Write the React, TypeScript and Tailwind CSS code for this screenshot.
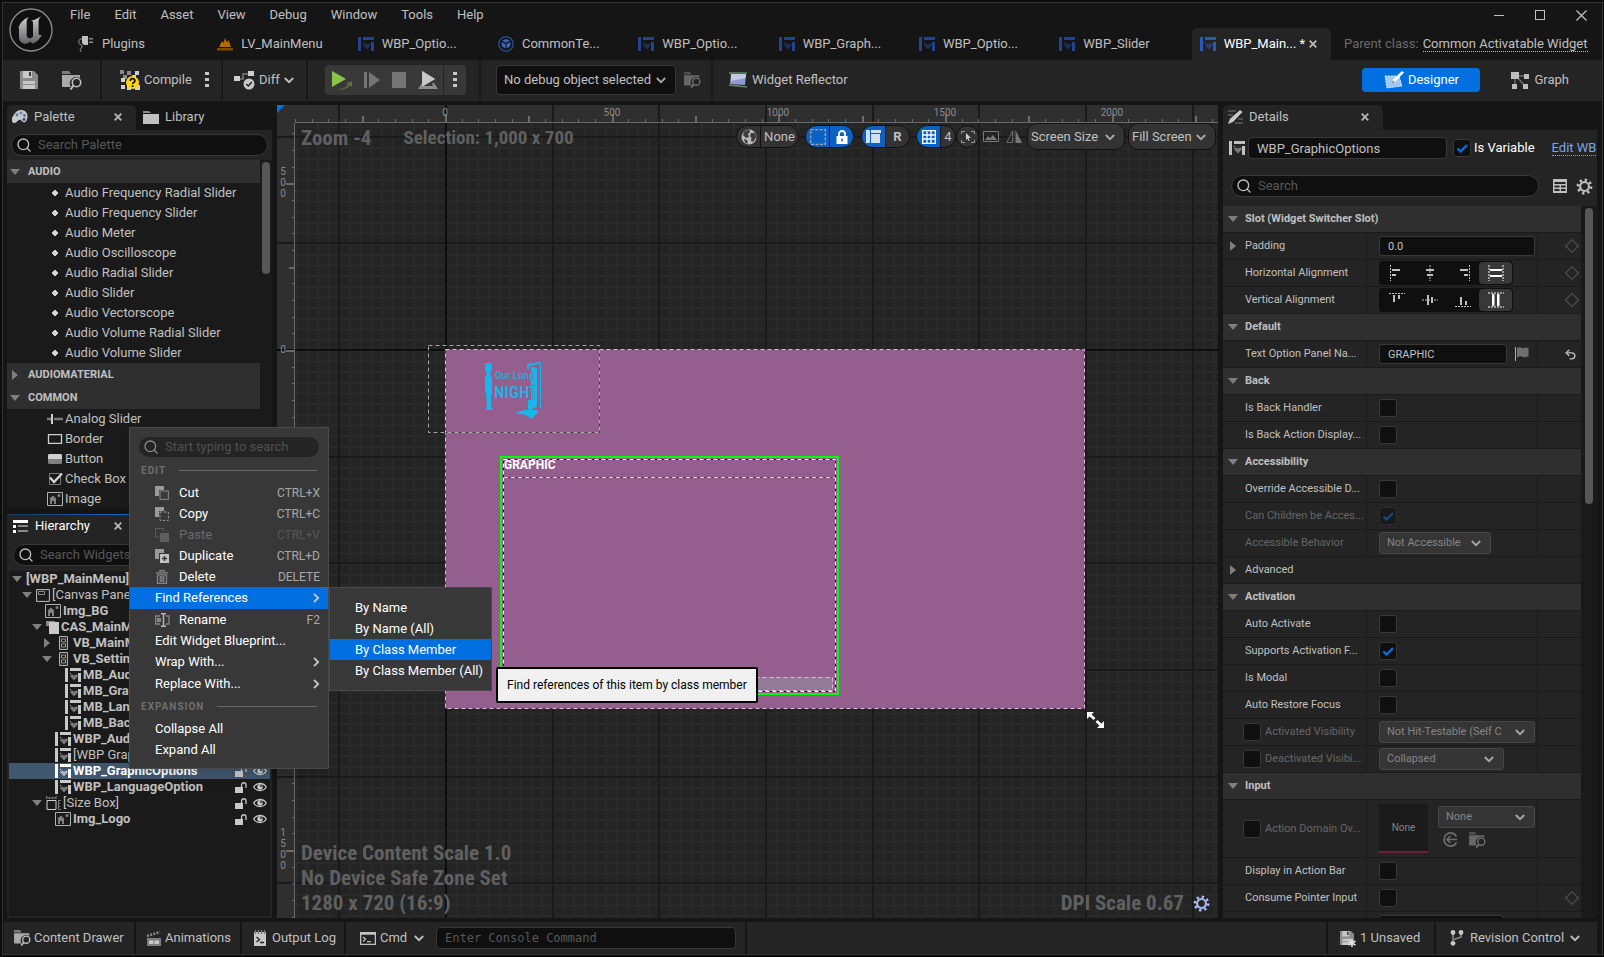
import type { ReactNode } from "react";
import { Search, Undo2 } from "lucide-react";
import { clsx } from "clsx";

type IconProps = { className?: string };

/* ---------- icons ---------- */

const UnrealLogo = () => (
  <svg viewBox="0 0 44 46" className="h-[46px] w-11">
    <defs>
      <linearGradient id="steel" x1="0" y1="0" x2="0" y2="1">
        <stop offset="0" stopColor="#d0d0d0" />
        <stop offset="1" stopColor="#5f6468" />
      </linearGradient>
    </defs>
    <circle cx="22" cy="22" r="21" fill="#101010" stroke="#8a8a8a" strokeWidth="1.4" />
    <path
      d="M9 22c1-6 5-11 11-13-1.800 1.600-2.300 3-2.300 5v13c0 2 1.300 3.300 2.800 3.300s2.700-.8 3.500-1.800V15c0-1.700-.6-2.200-2-2.300 3.600-.5 7-2.200 10-4.700-2 2.500-2.400 4-2.400 6v11c0 2 1 2.600 3.400 1.500-2 4.500-5 7.500-9.500 9.300l-2.300-2.300c-1.500 1.500-3.500 2.300-6 2.300-3.500-1-5.200-3-5.200-6.500V19c0-1.500-.4-1.700-1 3z"
      fill="url(#steel)"
    />
  </svg>
);

const Chevron = ({ right, className }: { right?: boolean; className?: string }) => (
  <svg viewBox="0 0 10 10" className={clsx("h-[10px] w-[10px] shrink-0", className)} fill="none" stroke="currentColor" strokeWidth="1.800">
    {right ? <path d="M3 .800L7.200 5 3 9.200" /> : <path d="M.8 3L5 7.200 9.200 3" />}
  </svg>
);

const GearIcon = ({ className }: IconProps) => (
  <svg viewBox="0 0 18 18" className={clsx("h-[17px] w-[17px]", className)} fill="none" stroke="currentColor">
    <circle cx="9" cy="9" r="4.700" strokeWidth="2.200" />
    <circle cx="9" cy="9" r="7" strokeWidth="2.800" strokeDasharray="2.500 3" />
  </svg>
);

const LockIcon = () => (
  <svg viewBox="0 0 12 14" className="h-[14px] w-3">
    <path d="M3 7V4c0-4 6-4 6 0v3" fill="none" stroke="#fff" strokeWidth="1.800" />
    <path d="M.5 6h11v8H.500z" fill="#fff" />
    <path d="M6 8.500v3" stroke="#0b62c4" strokeWidth="1.500" />
  </svg>
);

const WidgetIcon = ({ className }: IconProps) => (
  <svg viewBox="0 0 16 14" className={clsx("h-[14px] w-4 shrink-0", className)} fill="currentColor">
    <path d="M0 0h3v14H0zM5 0h11v3H5zM13 5h3v9h-3zM5 5h1v1H5z" />
    <path
      d="M9 12.500L5.500 8.800c-.8-1.500.4-2.600 1.600-2.300.9.100 1.500.6 1.900 1.300.400-.700 1-1.200 1.900-1.300 1.200-.300 2.400.800 1.600 2.300z"
      opacity=".55"
    />
  </svg>
);

const PlugIcon = () => (
  <svg viewBox="0 0 17 16" className="h-4 w-[17px]">
    <path d="M5 3C2 3 1 5 2 7s4 2 3 4-3 2-1 5" fill="none" stroke="#6d6d6d" strokeWidth="1.300" />
    <path d="M5 0h6v9H7L5 7z" fill="#c0c0c0" />
    <path d="M12 2h4v1.500h-4zM12 5.500h4V7h-4z" fill="#8a8a8a" />
  </svg>
);

const LevelIcon = () => (
  <svg viewBox="0 0 16 14" className="h-[14px] w-4" fill="#b36b00">
    <path d="M0 11h16v2.500H0z" fill="#7a4a05" />
    <path d="M2 10l3-6 1.500 2L8 1l2 4.500L11.500 3 14 10z" />
  </svg>
);

const CubeIcon = () => (
  <svg viewBox="0 0 16 16" className="h-4 w-4">
    <circle cx="8" cy="8" r="7.200" fill="none" stroke="#27509f" strokeWidth="1.300" />
    <path d="M8 3l4 1.800-4 2-4-2zM3.500 6L7.500 8v4.500L4 10.500zM12.500 6L8.500 8v4.500l3.500-2z" fill="#3a66bd" />
  </svg>
);

const SaveIcon = ({ className }: IconProps) => (
  <svg viewBox="0 0 18 18" className={className}>
    <path d="M0 0h14l4 4v14H0z" fill="#8b8b8b" />
    <path d="M3 0h9v7H3zM3 10h12v8H3z" fill="#c8c8c8" />
    <path d="M9 1h2v4H9z" fill="#3a3a3a" />
    <path d="M3 13h12v1H3z" fill="#8b8b8b" />
  </svg>
);

const BrowseIcon = ({ className }: IconProps) => (
  <svg viewBox="0 0 20 19" className={className}>
    <path d="M0 0h7l2 3H0z" fill="#7d7d7d" />
    <path d="M0 4h18v3a6.500 6.500 0 0 0-9 9H0z" fill="#b8b8b8" opacity=".9" />
    <circle cx="14.500" cy="11.500" r="4.200" fill="none" stroke="#c0c0c0" strokeWidth="1.600" />
    <path d="M11.500 14.500L8.500 18.500" stroke="#c0c0c0" strokeWidth="2" />
  </svg>
);

const CompileIcon = () => (
  <svg viewBox="0 0 20 20" className="h-5 w-5">
    <g fill="#8a8a8a">
      <path d="M0 0h4v4H0zM7 1h4v4H7zM3 5h4v4H3z" />
    </g>
    <g fill="#cfcfcf">
      <path d="M15 1h4v4h-4zM1 8h4v4H1zM1 15h4v4H1zM15 15h5v5h-5zM12 5h4v4h-4zM7 15h4v5H7z" />
    </g>
    <circle cx="12.500" cy="12.500" r="6.500" fill="#ffd60a" />
    <path d="M10.300 11c0-3 4.600-3 4.600-.2 0 1.700-2.300 1.500-2.300 3.200M12.600 15.300v1.700" fill="none" stroke="#111" strokeWidth="1.800" />
  </svg>
);

const DiffIcon = () => (
  <svg viewBox="0 0 21 19" className="h-[19px] w-[21px]">
    <path d="M5 8h4V3h6" fill="none" stroke="#7b7b7b" strokeWidth="1.500" />
    <path d="M0 5h6v5H0zM14 0h6v5h-6z" fill="#cfcfcf" />
    <circle cx="15" cy="13" r="5.500" fill="#c8c8c8" />
    <path d="M12.300 13l2 2 3.500-4" fill="none" stroke="#222" strokeWidth="1.500" />
  </svg>
);

const PlayIcon = () => (
  <svg viewBox="0 0 20 19" className="h-[19px] w-5">
    <path d="M0 0l14 8L0 16z" fill="#8bc34a" />
    <path d="M5 18c6 0 9-1 11-5l-2-.500L20 10v6l-2-1.500C15 18 10 19.500 5 18z" fill="#56743a" />
  </svg>
);

const StepIcon = () => (
  <svg viewBox="0 0 16 16" className="h-4 w-4" fill="#757575">
    <path d="M0 0h3v16H0zM5 0l11 8-11 8z" />
  </svg>
);

const LaunchIcon = () => (
  <svg viewBox="0 0 20 19" className="h-[19px] w-5">
    <path d="M4 0l13 8-13 8z" fill="#c8c8c8" />
    <path d="M4 12l-4 6h20l-4-6h-2l1 3-3 0H6l-2 0z" fill="#8d8d8d" />
    <path d="M4 0l13 8-13 7z" fill="#c8c8c8" />
  </svg>
);

const DotsIcon = () => (
  <svg viewBox="0 0 4 16" className="h-4 w-1" fill="#c8c8c8">
    <path d="M0 0h4v3H0zM0 6h4v3H0zM0 12h4v3H0z" />
  </svg>
);

const ReflectorIcon = () => (
  <svg viewBox="0 0 20 16" className="h-4 w-5">
    <path d="M1 1h18M1 13l18 2" stroke="#5f8a66" strokeWidth="1.500" />
    <path d="M3 2h15l-1 11L2 12z" fill="#8f9bd0" />
    <path d="M3 2h15l-.5 4L3 9z" fill="#c3c9e4" />
  </svg>
);

const DesignerIcon = () => (
  <svg viewBox="0 0 20 19" className="h-[19px] w-5">
    <path d="M1 5h14l3 10-15 2z" fill="#bcd9f7" opacity=".85" stroke="#fff" strokeDasharray="2 1" />
    <path d="M18 0l2 1.500L11 11l-4 3 1.500-5z" fill="#fff" />
    <path d="M7 14l1.500-5 2.500 2z" fill="#8ba3bd" />
  </svg>
);

const GraphIcon = () => (
  <svg viewBox="0 0 18 17" className="h-[17px] w-[18px]">
    <path d="M4 4h11M6 5l8 9M4 5v9" stroke="#6f6f6f" strokeWidth="1.400" />
    <path d="M0 0h8v7H0zM13 2h5v5h-5zM1 12h5v5H1zM12 12h5v5h-5z" fill="#bdbdbd" />
  </svg>
);

const PaletteIcon = () => (
  <svg viewBox="0 0 16 14" className="h-[14px] w-4">
    <path d="M9 0c4 0 7 3 6.500 7S13 13.500 11 12s-2-3-4-2-3 3-5 3-3-4-1-7 4-6 8-6z" fill="#c8c8c8" />
    <circle cx="5" cy="5" r="1.400" fill="#4d7ba8" />
    <circle cx="9" cy="3" r="1.400" fill="#5a87b0" />
    <circle cx="12.500" cy="5.500" r="1.400" fill="#4476b0" />
    <circle cx="12" cy="9.500" r="1.400" fill="#1e4e8c" />
  </svg>
);

const FolderIcon = () => (
  <svg viewBox="0 0 16 13" className="h-[13px] w-4" fill="#c0c0c0">
    <path d="M0 0h6l2 2H0z" fill="#8a8a8a" />
    <path d="M0 3h16v10H0z" />
  </svg>
);

const HierarchyIcon = () => (
  <svg viewBox="0 0 15 13" className="h-[13px] w-[15px]">
    <path d="M0 0h15v3H0zM0 5h3v3H0zM0 10h3v3H0z" fill="#fff" />
    <path d="M5 5h10v2H5zM5 10h10v2H5z" fill="#8a8a8a" />
  </svg>
);

const DetailsIcon = () => (
  <svg viewBox="0 0 15 14" className="h-[14px] w-[15px]">
    <path d="M0 1h8M0 5h5M10 9h5M7 13h8" stroke="#5c5c5c" strokeWidth="1.500" />
    <path d="M12 0l2.500 2L5 12l-5 2 1.800-5z" fill="#c8c8c8" />
  </svg>
);

const Dot = () => (
  <svg viewBox="0 0 6 6" className="mx-[5px] h-[6px] w-[6px] shrink-0">
    <path d="M2 0h2v1h1v1h1v2H5v1H4v1H2V5H1V4H0V2h1V1h1z" fill="#d4d4d4" />
  </svg>
);

const ImageIcon = () => (
  <svg viewBox="0 0 16 14" className="h-[14px] w-4 shrink-0">
    <path d="M.5.500h15v13H.500z" fill="none" stroke="#b0b0b0" />
    <path d="M2 7l4-3.500L9.500 7H9v5H7V9H5v3H3V7z" fill="#808080" />
    <circle cx="12" cy="3.500" r="1.500" fill="#808080" />
  </svg>
);

const AnalogIcon = () => (
  <svg viewBox="0 0 16 10" className="h-[10px] w-4 shrink-0">
    <path d="M0 5h4M7 5h9" stroke="#7a7a7a" strokeWidth="2.500" />
    <path d="M5 0v10" stroke="#d0d0d0" strokeWidth="2" />
  </svg>
);

const BorderIcon = () => (
  <svg viewBox="0 0 16 10" className="h-[10px] w-4 shrink-0">
    <path d="M1.500.700h13v8.600h-13z" fill="none" stroke="#d0d0d0" strokeWidth="1.300" />
  </svg>
);

const ButtonIcon = () => (
  <svg viewBox="0 0 16 10" className="h-[10px] w-4 shrink-0">
    <rect x="1" width="14" height="10" rx="1.500" fill="#808080" />
    <path d="M1 5V1.500Q1 0 2.500 0h11Q15 0 15 1.500V5z" fill="#d0d0d0" />
  </svg>
);

const CheckBoxIcon = () => (
  <svg viewBox="0 0 16 12" className="h-3 w-4 shrink-0">
    <path d="M2.500.500h11v11h-11z" fill="none" stroke="#777" />
    <path d="M3 4.500l4 4.500 8-8.500" fill="none" stroke="#d8d8d8" strokeWidth="2.200" />
  </svg>
);

const CanvasIcon = () => (
  <svg viewBox="0 0 14 13" className="h-[13px] w-[14px] shrink-0" fill="none">
    <path d="M.6.600h12.800v11.800H.600z" stroke="#c0c0c0" />
    <path d="M2.500 2.500h6v3h-6z" stroke="#8a8a8a" />
  </svg>
);

const SwitcherIcon = () => (
  <svg viewBox="0 0 13 13" className="h-[13px] w-[13px] shrink-0">
    <path d="M0 0h9v3H3v2H0z" fill="#8a8a8a" />
    <path d="M3 1h10v12H3z" fill="#c8c8c8" />
  </svg>
);

const VerticalBoxIcon = () => (
  <svg viewBox="0 0 9 14" className="mx-[3px] h-[14px] w-[9px] shrink-0" fill="none">
    <path d="M.6.600h7.800v12.800H.600z" stroke="#c0c0c0" />
    <path d="M2.500 3h4v3h-4zM2.500 8h4v3h-4z" stroke="#9a9a9a" />
  </svg>
);

const SizeBoxIcon = () => (
  <svg viewBox="0 0 15 14" className="h-[14px] w-[15px] shrink-0" fill="none">
    <path d="M1 4.500h9v9H1z" stroke="#d0d0d0" />
    <path d="M.5 0v2.500M3.500 1v1.500M6.500 1v1.500M10 0v2.500M.5 2h10M12.500 4v9.500M12.500 4.500H15M12.500 7.500h1.500M12.500 10.500h1.500M12.500 13.500H15" stroke="#808080" />
  </svg>
);

const UnlockIcon = () => (
  <svg viewBox="0 0 12 11" className="h-[11px] w-3">
    <path d="M0 5h8v6H0z" fill="#c8c8c8" />
    <path d="M6.500 5V3c0-3 4.500-3 4.500 0v3" fill="none" stroke="#c8c8c8" strokeWidth="1.300" />
  </svg>
);

const EyeIcon = () => (
  <svg viewBox="0 0 14 10" className="h-[10px] w-[14px]">
    <path d="M.7 5C3.500.300 10.500.300 13.300 5 10.500 9.700 3.500 9.700.700 5z" fill="none" stroke="#c8c8c8" strokeWidth="1.300" />
    <circle cx="7" cy="5" r="2.700" fill="#c8c8c8" />
    <circle cx="8" cy="4" r="1" fill="#333" />
  </svg>
);

const CutIcon = () => (
  <svg viewBox="0 0 14 14" className="h-[14px] w-[14px]">
    <path d="M0 0h9v4H4v6H0z" fill="#9a9a9a" />
    <path d="M5 5h8.400v8.400H5z" fill="#3a3a3a" stroke="#8a8a8a" />
  </svg>
);

const CopyIcon = () => (
  <svg viewBox="0 0 14 14" className="h-[14px] w-[14px]">
    <path d="M0 0h9v4H4v6H0z" fill="#9a9a9a" />
    <path d="M5 5h8.400v8.400H5z" fill="none" stroke="#9a9a9a" strokeDasharray="2.500 1.500" />
  </svg>
);

const PasteIcon = () => (
  <svg viewBox="0 0 14 14" className="h-[14px] w-[14px]">
    <path d="M8.500 3V.500h-8v8.500H4" fill="none" stroke="#5a5a5a" />
    <path d="M5 5h9v9H5z" fill="#5f5f5f" />
  </svg>
);

const DuplicateIcon = () => (
  <svg viewBox="0 0 14 14" className="h-[14px] w-[14px]">
    <path d="M0 0h9v4H4v6H0z" fill="#9a9a9a" />
    <path d="M5 5h9v9H5z" fill="#c0c0c0" />
    <path d="M9.500 7v5M7 9.500h5" stroke="#333" strokeWidth="1.300" />
  </svg>
);

const TrashIcon = () => (
  <svg viewBox="0 0 14 14" className="h-[14px] w-[14px]" fill="none" stroke="#858585" strokeWidth="1.300">
    <path d="M1 2.800h12M5 2V.700h4V2M2.500 5v8.300h9V5M2 4.800h10M5.300 6v6M7 6v6M8.700 6v6" />
  </svg>
);

const RenameIcon = () => (
  <svg viewBox="0 0 15 14" className="h-[14px] w-[15px]" fill="none">
    <path d="M5 3H.700v8H5M11 3h3v8h-3" stroke="#858585" strokeWidth="1.300" />
    <path d="M2 5h4v4H2z" fill="#858585" />
    <path d="M6 .700h5M6 13.300h5M8.500 1v12" stroke="#b5b5b5" strokeWidth="1.500" />
  </svg>
);

const GlobeIcon = () => (
  <svg viewBox="0 0 16 16" className="h-4 w-4">
    <circle cx="8" cy="8" r="7.500" fill="#b9b9b9" />
    <path d="M8 .500l1 2.500-2 2 1 3-3 1-3-3 1-3.500zM10 4l4 0 1.300 4L12 13l-2-1 .500-3-1.500-2zM3 10l3 1 1 3.800L4 13.500z" fill="#3d3d3d" />
  </svg>
);

const OutlineIcon = () => (
  <svg viewBox="0 0 16 16" className="h-4 w-4">
    <path d="M.7.700h14.600v14.600H.700z" fill="none" stroke="#a0a8b0" strokeWidth="1.300" strokeDasharray="3 1.500" />
  </svg>
);

const LayoutIcon = () => (
  <svg viewBox="0 0 15 13" className="h-[13px] w-[15px]" fill="#dfe7ef">
    <path d="M0 0h3.500v13H0zM5 0h10v3H5zM5 4h9v9H5zM3.500 1H5v11H3.500z" opacity=".95" />
    <path d="M4 0h1v13H4zM5 3h10v1H5z" fill="#0b62c4" />
  </svg>
);

const GridIcon = () => (
  <svg viewBox="0 0 14 14" className="h-[14px] w-[14px]">
    <path d="M.7.700h12.600v12.600H.700zM5 0v14M9 0v14M0 5h14M0 9h14" fill="none" stroke="#fff" strokeWidth="1.300" />
  </svg>
);

const FocusIcon = () => (
  <svg viewBox="0 0 14 12" className="h-3 w-[14px]">
    <path d="M.5 3V.500H4M10 .500h3.500V3M13.500 9v2.500H10M4 11.500H.500V9" fill="none" stroke="#999" />
    <path d="M5 2l5 5H7.500l1 2.500-1 .500-1-2.500L5 9z" fill="#d0d0d0" />
  </svg>
);

const PictureIcon = () => (
  <svg viewBox="0 0 16 11" className="h-[11px] w-4">
    <path d="M.5.500h15v10H.500z" fill="none" stroke="#777" />
    <path d="M2 9l3-4 2 2 3-3 4 5z" fill="#777" />
  </svg>
);

const MirrorIcon = () => (
  <svg viewBox="0 0 16 13" className="h-[13px] w-4">
    <path d="M6.500 1v11.500H.800z" fill="none" stroke="#6a6a6a" />
    <path d="M8 0v13" stroke="#555" strokeDasharray="1.500 1" />
    <path d="M9.500 0v13H16z" fill="#777" />
  </svg>
);

const TableIcon = () => (
  <svg viewBox="0 0 14 14" className="h-[14px] w-[14px]">
    <path d="M0 0h14v14H0z" fill="#c0c0c0" />
    <path d="M1.500 4h11M1.500 7.500h5M8 7.500h4.500M1.500 11h5M8 11h4.500" stroke="#242424" strokeWidth="2" />
  </svg>
);

const FlagIcon = () => (
  <svg viewBox="0 0 14 14" className="h-[14px] w-[14px]">
    <path d="M.500 0v14" stroke="#b0b0b0" />
    <path d="M2 1c3-2 5 1 7 0s3-.5 4.500 0v9c-2-1-3.500 1-5.500 0s-4-1-6 1z" fill="#6e6e6e" />
  </svg>
);

const UseAssetIcon = () => (
  <svg viewBox="0 0 15 15" className="h-[15px] w-[15px]" fill="none" stroke="#6d6d6d" strokeWidth="1.700">
    <path d="M13.500 4.500a6.600 6.600 0 1 0 0 6M14 7.500H4.500M7.500 4l-3.500 3.500L7.500 11" />
  </svg>
);

const ClapperIcon = () => (
  <svg viewBox="0 0 16 15" className="h-[15px] w-4">
    <path d="M1 5L14 1" stroke="#8a8a8a" strokeWidth="2.500" strokeDasharray="2 1.300" />
    <path d="M1 7h14v8H1z" fill="#7d7d7d" />
    <path d="M3 9.500h4.500V13H3zM8.500 9.500H13V13H8.500z" fill="#c8c8c8" />
  </svg>
);

const LogIcon = () => (
  <svg viewBox="0 0 12 16" className="h-4 w-3">
    <path d="M0 2h12v14H0z" fill="#c8c8c8" />
    <path d="M1.500 0v4M4.500 0v4M7.500 0v4M10.500 0v4" stroke="#7a7a7a" strokeWidth="1.300" />
    <path d="M2.500 7l3 2.500-3 2.500M6 12.500h4" fill="none" stroke="#222" strokeWidth="1.300" />
  </svg>
);

const ConsoleIcon = () => (
  <svg viewBox="0 0 16 13" className="h-[13px] w-4" fill="none" stroke="#c0c0c0" strokeWidth="1.300">
    <path d="M.6.600h14.800v11.800H.600zM.6 2h14.800M3 5l2.500 2L3 9.500M7 9.700h4" />
  </svg>
);

const BranchIcon = () => (
  <svg viewBox="0 0 14 16" className="h-4 w-[14px]">
    <path d="M3 3v10M11 3v4L4 9.500" fill="none" stroke="#8a8a8a" strokeWidth="1.500" />
    <circle cx="3" cy="2.500" r="2.400" fill="#c8c8c8" />
    <circle cx="11" cy="2.500" r="2.400" fill="#c8c8c8" />
    <circle cx="3" cy="13.300" r="2.400" fill="#c8c8c8" />
  </svg>
);

const Triangle = ({ open, className }: { open: boolean; className?: string }) => (
  <svg viewBox="0 0 10 10" className={clsx("h-[10px] w-[10px] shrink-0", className)} fill="#7f7f7f">
    {open ? <path d="M0 2h10L5 8z" /> : <path d="M2 0v10l6-5z" />}
  </svg>
);

const alignPaths: Record<string, string[]> = {
  h: [
    "M1.500 0v16|M3 4h8v2H3zM3 9h4v2H3z",
    "M8 0v16|M4 4h8v2H4zM5 9h6v2H5z",
    "M14.500 0v16|M5 4h8v2H5zM9 9h4v2H9z",
    "M1 0v16M15 0v16|M2 4h12v2H2zM2 10h12v2H2z",
  ],
  v: [
    "M0 1.500h16|M4 3h2v7H4zM9 3h2v4H9z",
    "M0 8h16|M5 3h2v10H5zM9 5h2v6H9z",
    "M0 14.500h16|M5 5h2v8H5zM10 9h2v4h-2z",
    "M0 1h16M0 15h16|M4 2h2.500v12H4zM9 2h2.500v12H9z",
  ],
};

/* ---------- small controls ---------- */

const Check = ({ id, checked, disabled, label }: { id?: string; checked?: boolean; disabled?: boolean; label?: string }) => (
  <span className={clsx("relative flex h-[18px] w-[18px] shrink-0", disabled && "opacity-50")}>
    <input
      id={id}
      type="checkbox"
      aria-label={label}
      defaultChecked={checked}
      disabled={disabled}
      className="peer h-[18px] w-[18px] appearance-none rounded-[3px] border border-[#383838] bg-[#0f0f0f]"
    />
    <svg viewBox="0 0 18 18" className="pointer-events-none absolute inset-0 hidden peer-checked:block">
      <path d="M4.500 9.500l3 3L14 6" fill="none" stroke="#0070e0" strokeWidth="2.400" />
    </svg>
  </span>
);

const Drop = ({ id, label, value, className, box }: { id?: string; label?: string; value: string; className?: string; box: string }) => (
  <span className={clsx("relative inline-flex", box)}>
    <select id={id} aria-label={label} className={clsx("w-full appearance-none overflow-hidden text-clip whitespace-nowrap", className)}>
      <option>{value}</option>
    </select>
    <Chevron className="pointer-events-none absolute top-1/2 right-[10px] -translate-y-1/2 text-[#a8a8a8]" />
  </span>
);

const SearchBox = ({ placeholder, className }: { placeholder: string; className?: string }) => (
  <label className={clsx("flex h-[22px] items-center gap-[6px] rounded-full border border-[#383838] bg-[#0f0f0f] px-1", className)}>
    <Search strokeWidth={2} className="h-4 w-4 shrink-0 text-[#c0c0c0]" />
    <input type="search" aria-label={placeholder} placeholder={placeholder} className="w-full min-w-0 bg-transparent text-[13px] outline-none placeholder:text-[#575757]" />
  </label>
);

const CloseX = ({ label }: { label: string }) => (
  <button aria-label={label}>
    <svg viewBox="0 0 8 8" className="h-2 w-2" stroke="#b8b8b8" strokeWidth="1.800">
      <path d="M.7.700l6.600 6.600M7.300.700L.700 7.300" />
    </svg>
  </button>
);

/* ---------- header ---------- */

const menus = ["File", "Edit", "Asset", "View", "Debug", "Window", "Tools", "Help"];

const tabs: { label: string; icon: ReactNode }[] = [
  { label: "Plugins", icon: <PlugIcon /> },
  { label: "LV_MainMenu", icon: <LevelIcon /> },
  { label: "WBP_Optio...", icon: <WidgetIcon className="text-[#23448a]" /> },
  { label: "CommonTe...", icon: <CubeIcon /> },
  { label: "WBP_Optio...", icon: <WidgetIcon className="text-[#23448a]" /> },
  { label: "WBP_Graph...", icon: <WidgetIcon className="text-[#23448a]" /> },
  { label: "WBP_Optio...", icon: <WidgetIcon className="text-[#23448a]" /> },
  { label: "WBP_Slider", icon: <WidgetIcon className="text-[#23448a]" /> },
];

const TitleBar = () => (
  <header className="flex h-[57px] shrink-0 pl-[6px]">
    <div className="w-[60px] shrink-0 pt-[5px]">
      <UnrealLogo />
    </div>
    <div className="flex min-w-0 flex-1 flex-col">
      <div className="flex h-6 items-center justify-between">
        <nav className="flex gap-6 pl-px">
          {menus.map((m) => (
            <button key={m}>{m}</button>
          ))}
        </nav>
        <div className="flex items-center gap-[31px] pr-[15px]">
          <button aria-label="Minimize" className="h-px w-[10px] bg-[#c0c0c0]" />
          <button aria-label="Maximize" className="h-[10px] w-[10px] border border-[#c0c0c0]" />
          <button aria-label="Close">
            <svg viewBox="0 0 11 11" className="h-[11px] w-[11px]" stroke="#c0c0c0" strokeWidth="1.300">
              <path d="M.5.500l10 10M10.500.500l-10 10" />
            </svg>
          </button>
        </div>
      </div>
      <div className="mt-px flex h-8 items-stretch">
        <div className="flex min-w-0 flex-1 gap-px">
          {tabs.map((t, i) => (
            <button key={i} className="flex flex-1 items-center gap-2 pl-2">
              {t.icon}
              {t.label}
            </button>
          ))}
          <div className="flex flex-1 items-center gap-2 rounded-t-[5px] bg-[#242424] pl-2 text-white">
            <WidgetIcon className="text-[#2a59b8]" />
            <span className="flex items-center gap-1">
              WBP_Main... * <CloseX label="Close tab" />
            </span>
          </div>
        </div>
        <div className="flex w-[271px] shrink-0 items-center gap-1 pl-[13px] whitespace-nowrap text-[#6a6a6a]">
          Parent class:
          <a href="#parent" className="border-b border-dotted border-[#c0c0c0] leading-[15px] text-[#c0c0c0]">
            Common Activatable Widget
          </a>
        </div>
      </div>
    </div>
  </header>
);

const Rule = () => <div className="w-[2px] self-stretch bg-[#191919]" />;

const Toolbar = () => (
  <div className="flex h-[41px] shrink-0 items-center bg-[#242424] pb-px">
    <div className="flex w-[97px] items-center gap-6 pl-[17px]">
      <button aria-label="Save">
        <SaveIcon className="h-[18px] w-[18px]" />
      </button>
      <button aria-label="Browse">
        <BrowseIcon className="h-[19px] w-5" />
      </button>
    </div>
    <Rule />
    <div className="flex w-[119px] items-center pl-[18px]">
      <button className="flex items-center gap-1">
        <CompileIcon /> Compile
      </button>
      <button aria-label="Compile options" className="ml-[13px]">
        <DotsIcon />
      </button>
    </div>
    <Rule />
    <button className="flex w-[83px] items-center gap-1 pl-[11px]">
      <DiffIcon /> Diff <Chevron />
    </button>
    <Rule />
    <div className="flex w-[171px] pl-[17px]">
      <div className="flex h-[30px] w-[141px] items-center rounded bg-[#383838] pl-[7px]">
        <div className="flex items-center gap-3">
          <button aria-label="Play"><PlayIcon /></button>
          <button aria-label="Step"><StepIcon /></button>
          <button aria-label="Stop" className="h-4 w-[14px] bg-[#757575]" />
          <button aria-label="Launch"><LaunchIcon /></button>
        </div>
        <button aria-label="Play options" className="ml-[5px] flex h-full flex-1 items-center justify-center border-l border-[#242424]">
          <DotsIcon />
        </button>
      </div>
    </div>
    <Rule />
    <div className="flex w-[230px] items-center gap-2 pl-[15px]">
      <Drop
        label="Debug object"
        value="No debug object selected"
        box="w-[180px] shrink-0"
        className="h-[30px] rounded border border-[#383838] bg-[#0f0f0f] pl-[7px]"
      />
      <button aria-label="Browse debug object" className="opacity-50">
        <BrowseIcon className="h-4 w-[17px]" />
      </button>
    </div>
    <Rule />
    <button className="flex items-center gap-1 pl-[15px]">
      <ReflectorIcon /> Widget Reflector
    </button>
    <div className="ml-auto flex items-center gap-[31px] pr-[33px]">
      <button className="flex h-6 w-[118px] items-center justify-center gap-1 rounded bg-[#0070e0] text-white">
        <DesignerIcon /> Designer
      </button>
      <button className="flex items-center gap-[5px]">
        <GraphIcon /> Graph
      </button>
    </div>
  </div>
);

/* ---------- left side ---------- */

const audioItems = [
  "Audio Frequency Radial Slider",
  "Audio Frequency Slider",
  "Audio Meter",
  "Audio Oscilloscope",
  "Audio Radial Slider",
  "Audio Slider",
  "Audio Vectorscope",
  "Audio Volume Radial Slider",
  "Audio Volume Slider",
];

const commonItems: [string, ReactNode][] = [
  ["Analog Slider", <AnalogIcon />],
  ["Border", <BorderIcon />],
  ["Button", <ButtonIcon />],
  ["Check Box", <CheckBoxIcon />],
  ["Image", <ImageIcon />],
];

const Category = ({ name, open }: { name: string; open: boolean }) => (
  <button className="flex h-[23px] w-full items-center gap-2 bg-[#2f2f2f] pl-[3px] text-[11px] font-bold">
    <Triangle open={open} /> {name}
  </button>
);

const PaletteItem = ({ name, icon }: { name: string; icon: ReactNode }) => (
  <li className="flex h-5 items-center gap-[2px] pl-10">
    {icon} {name}
  </li>
);

const Palette = () => (
  <section className="flex h-[403px] shrink-0 flex-col overflow-hidden">
    <div className="flex h-[25px] shrink-0">
      <div className="flex w-[129px] items-center gap-[6px] rounded-t-[5px] bg-[#242424] pr-[14px] pb-px pl-[5px]">
        <PaletteIcon /> <span className="flex-1">Palette</span> <CloseX label="Close palette" />
      </div>
      <button className="flex items-center gap-[6px] pb-px pl-[7px]">
        <FolderIcon /> Library
      </button>
    </div>
    <div className="shrink-0 bg-[#242424] px-1 py-1">
      <SearchBox placeholder="Search Palette" />
    </div>
    <div className="flex min-h-0 flex-1 bg-[#1a1a1a]">
      <div className="min-w-0 flex-1">
        <Category name="AUDIO" open />
        <ul>
          {audioItems.map((name) => (
            <PaletteItem key={name} name={name} icon={<Dot />} />
          ))}
        </ul>
        <Category name="AUDIOMATERIAL" open={false} />
        <Category name="COMMON" open />
        <ul>
          {commonItems.map(([name, icon]) => (
            <PaletteItem key={name} name={name} icon={icon} />
          ))}
        </ul>
      </div>
      <div className="w-3 shrink-0 pt-[2px] pl-[2px]">
        <div className="h-[112px] w-2 rounded-full bg-[#575757]" />
      </div>
    </div>
  </section>
);

type TreeRow = { name: string; indent: string; icon?: ReactNode; open?: boolean; bold?: boolean; selected?: boolean; tools?: boolean };

const w = <WidgetIcon className="text-[#c8c8c8]" />;

const tree: TreeRow[] = [
  { name: "[WBP_MainMenu]", indent: "pl-[3px]", open: true, bold: true },
  { name: "[Canvas Panel]", indent: "pl-[13px]", icon: <CanvasIcon />, open: true },
  { name: "Img_BG", indent: "pl-9", icon: <ImageIcon />, bold: true },
  { name: "CAS_MainMenu", indent: "pl-[23px]", icon: <SwitcherIcon />, open: true, bold: true },
  { name: "VB_MainMenu", indent: "pl-[33px]", icon: <VerticalBoxIcon />, open: false, bold: true },
  { name: "VB_Settings", indent: "pl-[33px]", icon: <VerticalBoxIcon />, open: true, bold: true },
  { name: "MB_Audio", indent: "pl-14", icon: w, bold: true },
  { name: "MB_Graphic", indent: "pl-14", icon: w, bold: true },
  { name: "MB_Language", indent: "pl-14", icon: w, bold: true },
  { name: "MB_Back", indent: "pl-14", icon: w, bold: true },
  { name: "WBP_AudioOptions", indent: "pl-[46px]", icon: w, bold: true, tools: true },
  { name: "[WBP Graphic]", indent: "pl-[46px]", icon: w, tools: true },
  { name: "WBP_GraphicOptions", indent: "pl-[46px]", icon: <WidgetIcon className="text-white" />, bold: true, selected: true, tools: true },
  { name: "WBP_LanguageOption", indent: "pl-[46px]", icon: w, bold: true, tools: true },
  { name: "[Size Box]", indent: "pl-[23px]", icon: <SizeBoxIcon />, open: true, tools: true },
  { name: "Img_Logo", indent: "pl-[46px]", icon: <ImageIcon />, bold: true, tools: true },
];

const Hierarchy = () => (
  <section className="mt-[6px] flex min-h-0 flex-1 flex-col bg-[#242424]">
    <div className="h-px shrink-0 bg-linear-to-r from-[#1a3a60] via-[#0070e0] to-[#1a1a1a]" />
    <div className="flex h-[25px] shrink-0 items-center gap-[7px] pb-[3px] pl-[6px] text-white">
      <HierarchyIcon /> <span className="w-[72px]">Hierarchy</span> <CloseX label="Close hierarchy" />
    </div>
    <div className="shrink-0 px-[6px] pt-1 pb-[5px]">
      <SearchBox placeholder="Search Widgets" />
    </div>
    <ul className="mx-[2px] mb-[2px] min-h-0 flex-1 bg-[#1a1a1a]">
      {tree.map((row) => (
        <li
          key={row.name}
          className={clsx(
            "flex h-4 items-center whitespace-nowrap",
            row.indent,
            row.bold && "font-bold",
            row.selected && "bg-[#40576f] text-white",
          )}
        >
          {row.open !== undefined && <Triangle open={row.open} className={row.icon ? "mr-1" : "mr-[2px]"} />}
          {row.icon}
          <span className="ml-[2px] flex-1">{row.name}</span>
          {row.tools && (
            <span className="flex items-center gap-[6px] pr-[3px]">
              <button aria-label={`Lock ${row.name}`}><UnlockIcon /></button>
              <button aria-label={`Show ${row.name}`}><EyeIcon /></button>
            </span>
          )}
        </li>
      ))}
    </ul>
  </section>
);

/* ---------- designer viewport ---------- */

const ORIGIN_X = 168;
const ORIGIN_Y = 245;
const CELL = 106.667;
const range = (from: number, to: number) => Array.from({ length: to - from + 1 }, (_, i) => from + i);

// digits of the vertical ruler, stacked from the given height
const rulerDigits = [
  { label: "500", y: 70 },
  { label: "0", y: 248 },
  { label: "1500", y: 731 },
];

const DesignSurface = () => (
  <svg className="absolute inset-0 h-full w-full" fontFamily="Roboto, sans-serif">
    <defs>
      <pattern id="minor" x={ORIGIN_X} y={ORIGIN_Y} width={CELL / 10} height={CELL / 10} patternUnits="userSpaceOnUse">
        <path d={`M0 0H${CELL / 10}M0 0V${CELL / 10}`} stroke="#2a2a2a" strokeWidth="3.600" />
      </pattern>
    </defs>
    <rect width="100%" height="100%" fill="#242424" />
    <rect width="100%" height="100%" fill="url(#minor)" />
    <rect width="100%" height="18" fill="#2f2f2f" />
    <rect width="18" height="100%" fill="#2f2f2f" />
    <g fill="#1a1a1a">
      {range(-1, 9).map((i) => (
        <rect key={i} x={Math.round(ORIGIN_X + i * CELL)} y="0" width="2" height="100%" />
      ))}
      {range(-2, 6).map((i) => (
        <rect key={i} x="0" y={Math.round(ORIGIN_Y + i * CELL) - 1} width="100%" height="2" />
      ))}
    </g>
    <g fill="#0d0d0d">
      <rect x={ORIGIN_X} y="0" width="2" height="100%" />
      <rect x="0" y={ORIGIN_Y - 1} width="100%" height="2" />
    </g>
    <g fill="#6a6a6a">
      <rect x="18" y="17" width="100%" height="1" />
      <rect x="17" y="18" width="1" height="100%" />
      {range(-9, 46).map((i) => {
        const h = i % 10 === 0 ? 8 : i % 5 === 0 ? 6 : 3;
        return <rect key={i} x={Math.round(ORIGIN_X + i * 16.667)} y={17 - h} width={i % 5 === 0 ? 2 : 1} height={h} />;
      })}
      {range(-13, 34).map((i) => {
        const len = i % 10 === 0 ? 8 : i % 5 === 0 ? 5 : 2;
        return <rect key={i} x={17 - len} y={Math.round(ORIGIN_Y + i * 16.667)} width={len} height={i % 5 === 0 ? 2 : 1} />;
      })}
    </g>
    <g fill="#8a8a8a" fontSize="10" textAnchor="middle">
      {range(0, 4).map((i) => (
        <text key={i} x={Math.round(ORIGIN_X + i * 166.667)} y="11">{i * 500}</text>
      ))}
      {rulerDigits.map(({ label, y }) =>
        label.split("").map((digit, d) => (
          <text key={`${label}-${d}`} x="6" y={y + d * 11}>{digit}</text>
        )),
      )}
    </g>
    <path d="M0 0h8L0 8z" fill="#0070e0" />

    {/* root canvas */}
    <rect x="168" y="245" width="640" height="359" fill="#945e8e" />
    <rect x="168.500" y="244.500" width="639" height="359" fill="none" stroke="#4f344c" />
    <rect x="168.500" y="244.500" width="639" height="359" fill="none" stroke="#d9b9d6" strokeDasharray="4 3" />

    {/* size box with the logo */}
    <rect x="151.500" y="240.500" width="171" height="87" fill="none" stroke="#1a1a1a" strokeOpacity=".600" />
    <rect x="151.500" y="240.500" width="171" height="87" fill="none" stroke="#d0d0d0" strokeOpacity=".750" strokeDasharray="4 3" />
    <g fill="#17b6ec">
      <path d="M209 258h5l1 4-1 4-1 3 2 3v16l-1 2v12l2 3h-7l1-4-1-13-1-3v-13l2-3-2-4v-5z" />
      <path d="M250 259l14-2v46l-1 1v-45l-11 2v3h-2z" />
      <path d="M254 262l6 1v38l-6 4-3-1v-9h3z" />
      <path d="M238 308l9-3h11l4 1-7 8-6-4z" />
      <g stroke="#945e8e" strokeWidth=".8" paintOrder="stroke" fontFamily="'Roboto Condensed', Roboto, sans-serif">
        <text x="218" y="274" fontSize="11">Our Long</text>
        <text x="217" y="293" fontSize="17" fontWeight="500">NIGHT</text>
      </g>
    </g>

    {/* selected widget */}
    <rect x="226" y="572" width="330" height="14" fill="#937b97" />
    <rect x="226.500" y="572.500" width="329" height="13" fill="none" stroke="#d0c0d0" strokeDasharray="4 3" />
    <rect x="224" y="352" width="337" height="237" fill="none" stroke="#0f0" strokeWidth="2" />
    <rect x="226.500" y="354.500" width="332" height="232" fill="none" stroke="#111" />
    <rect x="226.500" y="354.500" width="332" height="232" fill="none" stroke="#fff" strokeDasharray="4 3" />
    <path d="M227 372.500h331" stroke="#5a3a57" />
    <path d="M227 372.500h331" stroke="#e0c8de" strokeDasharray="4 3" />
    <text x="227" y="364" fill="#fff" fontSize="12" fontWeight="700">GRAPHIC</text>

    {/* resize grip */}
    <path d="M810 607h7l-7 7zM827 623h-7l7-7z" fill="#fff" />
    <path d="M812 609l5.500 5M819.500 616l5.500 5" stroke="#fff" strokeWidth="2.800" />
  </svg>
);

const Pill = ({ children, className }: { children: ReactNode; className?: string }) => (
  <div className={clsx("flex h-[23px] divide-x divide-[#111] overflow-hidden rounded-full border border-[#111] bg-[#333333]", className)}>{children}</div>
);

const PillButton = ({ label, on, children, className }: { label: string; on?: boolean; children: ReactNode; className?: string }) => (
  <button aria-label={label} className={clsx("flex flex-1 items-center justify-center", on && "bg-[#0b62c4] text-white", className)}>
    {children}
  </button>
);

const Viewport = () => (
  <main className="relative min-w-0 flex-1 overflow-hidden font-[Roboto,sans-serif]">
    <DesignSurface />
    <div className="absolute top-[21px] left-6 flex items-center gap-8 font-[Roboto_Condensed,Roboto] text-[21px] leading-6 font-bold text-[#606060]">
      <span>Zoom -4</span>
      <span className="text-[19px]">Selection: 1,000 x 700</span>
    </div>
    <div className="absolute bottom-[2px] left-6 font-[Roboto_Condensed,Roboto] text-[21px] leading-[25px] font-bold text-[#606060]">
      <p>Device Content Scale 1.0</p>
      <p>No Device Safe Zone Set</p>
      <p>1280 x 720 (16:9)</p>
    </div>
    <div className="absolute right-2 bottom-[2px] flex items-center gap-[9px] font-[Roboto_Condensed,Roboto] text-[21px] leading-[25px] font-bold text-[#606060]">
      DPI Scale 0.67
      <button aria-label="DPI settings" className="text-[#a9bdf0]">
        <GearIcon />
      </button>
    </div>
    <div className="absolute top-[18px] right-[2px] flex items-center">
      <Pill className="w-[63px]">
        <button aria-label="Locale" className="flex w-6 items-center justify-center"><GlobeIcon /></button>
        <PillButton label="Localization preview">None</PillButton>
      </Pill>
      <Pill className="ml-[6px] w-[49px]">
        <PillButton label="Show outlines" on><OutlineIcon /></PillButton>
        <PillButton label="Respect locks" on><LockIcon /></PillButton>
      </Pill>
      <Pill className="ml-[7px] w-[49px]">
        <PillButton label="Layout transform" on><LayoutIcon /></PillButton>
        <PillButton label="Render transform" className="font-bold">R</PillButton>
      </Pill>
      <Pill className="ml-[6px] w-[40px]">
        <button aria-label="Grid snapping" className="flex w-6 items-center justify-center bg-[#0b62c4]"><GridIcon /></button>
        <PillButton label="Grid size">4</PillButton>
      </Pill>
      <Pill className="w-[23px]"><PillButton label="Zoom to fit"><FocusIcon /></PillButton></Pill>
      <button aria-label="Background image" className="flex h-[23px] w-[23px] items-center justify-center"><PictureIcon /></button>
      <button aria-label="Flip layout" className="flex h-[23px] w-[23px] items-center justify-center"><MirrorIcon /></button>
      <Drop label="Screen Size" value="Screen Size" box="ml-[2px] w-[98px]" className="h-[27px] rounded-[10px] border border-[#111] bg-[#333333] pl-[3px]" />
      <Drop label="Fill Screen" value="Fill Screen" box="ml-[3px] w-[88px]" className="h-[27px] rounded-[10px] border border-[#111] bg-[#333333] pl-[3px]" />
    </div>
  </main>
);

/* ---------- details ---------- */

const Diamond = () => <span className="block h-[10px] w-[10px] rotate-45 border border-[#575757]" />;

const Section = ({ name }: { name: string }) => (
  <button className="flex h-[27px] w-full items-center gap-[7px] border-b border-[#1a1a1a] bg-[#2f2f2f] pl-[5px] font-bold">
    <Triangle open /> {name}
  </button>
);

type PropProps = { id: string; name: string; dim?: boolean; lead?: ReactNode; tall?: boolean; end?: ReactNode; children?: ReactNode };

const Prop = ({ id, name, dim, lead, tall, end, children }: PropProps) => (
  <div className={clsx("flex border-b border-[#1a1a1a]", tall ? "h-[58px]" : "h-[27px]")}>
    <div className="flex w-[143px] shrink-0 items-center">
      <span className={clsx("flex shrink-0", lead && dim ? "w-[38px] pl-5" : "w-[22px] pl-[5px]")}>{lead}</span>
      <label htmlFor={id} className={clsx("whitespace-nowrap", dim && "text-[#666666]", lead && dim && "pl-[4px]")}>
        {name}
      </label>
    </div>
    <div className="flex min-w-0 flex-1 items-center border-l border-[#1a1a1a] pl-3">{children}</div>
    <div className="flex w-[44px] shrink-0 items-center justify-end border-l border-[#1a1a1a] pr-1">{end}</div>
  </div>
);

const CheckProp = ({ name, checked, dim, end }: { name: string; checked?: boolean; dim?: boolean; end?: ReactNode }) => (
  <Prop id={name} name={name} dim={dim} end={end}>
    <Check id={name} checked={checked} disabled={dim} />
  </Prop>
);

const AlignPicker = ({ id, axis }: { id: string; axis: "h" | "v" }) => (
  <div id={id} role="group" className="flex h-6 rounded bg-[#0f0f0f] p-px">
    {alignPaths[axis].map((p, i) => {
      const [guide, bars] = p.split("|");
      const active = i === 3;
      return (
        <button key={i} aria-label={`Align ${i + 1}`} className={clsx("flex w-[33px] items-center justify-center rounded", active ? "bg-[#383838] text-white" : "text-[#c0c0c0]")}>
          <svg viewBox="0 0 16 16" className="h-4 w-4">
            <path d={guide} stroke="currentColor" strokeDasharray="2 1" />
            <path d={bars} fill="currentColor" />
          </svg>
        </button>
      );
    })}
  </div>
);

const fieldClass = "h-5 rounded-[3px] border border-[#383838] bg-[#0f0f0f] px-2 text-[#c0c0c0]";
const dropClass = "h-[22px] rounded-[3px] border border-[#464646] bg-[#353535] pl-[7px] pr-7 text-[#858585]";

const Details = () => (
  <aside className="flex w-[374px] shrink-0 flex-col text-[11px]">
    <div className="flex h-[25px] w-[160px] shrink-0 items-center gap-[6px] rounded-t-[5px] bg-[#242424] pr-[14px] pb-px pl-[5px] text-[13px]">
      <DetailsIcon /> <span className="flex-1">Details</span> <CloseX label="Close details" />
    </div>
    <div className="shrink-0 overflow-hidden bg-[#242424] pl-[6px] text-[13px]">
      <div className="flex h-9 items-center whitespace-nowrap">
        <WidgetIcon className="text-[#c0c0c0]" />
        <input aria-label="Widget name" defaultValue="WBP_GraphicOptions" className="ml-[3px] h-[22px] w-[199px] shrink-0 rounded border border-[#383838] bg-[#0f0f0f] px-2" />
        <label className="ml-[6px] flex items-center gap-[3px] text-white">
          <Check checked /> Is Variable
        </label>
        <a href="#edit" className="ml-[17px] border-b border-dotted border-[#7aa7e8] leading-[15px] text-[#7aa7e8]">
          Edit WB
        </a>
      </div>
      <div className="flex items-center pt-[9px] pr-1 pb-[9px]">
        <SearchBox placeholder="Search" className="ml-[2px] flex-1" />
        <button aria-label="Property matrix" className="ml-[14px]"><TableIcon /></button>
        <button aria-label="Details settings" className="ml-[9px] text-[#c0c0c0]">
          <GearIcon />
        </button>
      </div>
    </div>
    <div className="flex min-h-0 flex-1 overflow-hidden bg-[#1a1a1a]">
      <div className="min-w-0 flex-1 bg-[#242424]">
        <Section name="Slot (Widget Switcher Slot)" />
        <Prop id="padding" name="Padding" lead={<Triangle open={false} />} end={<Diamond />}>
          <input id="padding" defaultValue="0.0" className={clsx(fieldClass, "w-[156px]")} />
        </Prop>
        <Prop id="halign" name="Horizontal Alignment" end={<Diamond />}>
          <AlignPicker id="halign" axis="h" />
        </Prop>
        <Prop id="valign" name="Vertical Alignment" end={<Diamond />}>
          <AlignPicker id="valign" axis="v" />
        </Prop>
        <Section name="Default" />
        <Prop id="panel-name" name="Text Option Panel Na..." end={<Undo2 strokeWidth={2.500} className="h-[13px] w-[13px]" />}>
          <input id="panel-name" defaultValue="GRAPHIC" className={clsx(fieldClass, "mr-2 w-32")} />
          <FlagIcon />
        </Prop>
        <Section name="Back" />
        <CheckProp name="Is Back Handler" />
        <CheckProp name="Is Back Action Display..." />
        <Section name="Accessibility" />
        <CheckProp name="Override Accessible D..." />
        <CheckProp name="Can Children be Acces..." checked dim />
        <Prop id="behavior" name="Accessible Behavior" dim>
          <Drop id="behavior" value="Not Accessible" box="w-28" className={dropClass} />
        </Prop>
        <button className="flex h-[27px] w-full items-center gap-[7px] border-b border-[#1a1a1a] pl-[5px]">
          <Triangle open={false} /> Advanced
        </button>
        <Section name="Activation" />
        <CheckProp name="Auto Activate" />
        <CheckProp name="Supports Activation F..." checked />
        <CheckProp name="Is Modal" />
        <CheckProp name="Auto Restore Focus" />
        <Prop id="act-vis" name="Activated Visibility" dim lead={<Check label="Override activated visibility" />}>
          <Drop id="act-vis" value="Not Hit-Testable (Self C" box="w-[156px]" className={dropClass} />
        </Prop>
        <Prop id="deact-vis" name="Deactivated Visibi..." dim lead={<Check label="Override deactivated visibility" />}>
          <Drop id="deact-vis" value="Collapsed" box="w-[125px]" className={dropClass} />
        </Prop>
        <Section name="Input" />
        <Prop id="domain" name="Action Domain Ov..." dim tall lead={<Check label="Override action domain" />}>
          <div className="flex h-[49px] w-[49px] shrink-0 items-center justify-center border-b-2 border-[#6f1d3a] bg-[#1a1a1a] text-[10px] text-[#858585]">None</div>
          <div className="ml-[10px] flex flex-col gap-1 pb-1">
            <Drop id="domain" value="None" box="w-[97px]" className={dropClass} />
            <div className="flex gap-[11px] pl-[5px]">
              <button aria-label="Use selected asset"><UseAssetIcon /></button>
              <button aria-label="Browse to asset" className="opacity-50"><BrowseIcon className="h-4 w-[17px]" /></button>
            </div>
          </div>
        </Prop>
        <CheckProp name="Display in Action Bar" />
        <CheckProp name="Consume Pointer Input" end={<Diamond />} />
        <Prop id="name-override" name="">
          <input id="name-override" aria-label="Name override" className={clsx(fieldClass, "w-[125px]")} />
        </Prop>
      </div>
      <div className="w-4 shrink-0 pt-[2px] pl-1">
        <div className="h-[296px] w-2 rounded-full bg-[#575757]" />
      </div>
    </div>
  </aside>
);

/* ---------- status bar ---------- */

const StatusBar = () => (
  <footer className="mt-[4px] flex h-8 shrink-0 items-center gap-[2px] px-px">
    <button className="flex h-full w-[130px] items-center gap-[3px] bg-[#242424] pl-[10px]">
      <BrowseIcon className="h-4 w-[17px]" /> Content Drawer
    </button>
    <button className="flex h-full w-[104px] items-center gap-[3px] bg-[#242424] pl-[10px]">
      <ClapperIcon /> Animations
    </button>
    <button className="flex h-full w-[102px] items-center gap-[6px] bg-[#242424] pl-3">
      <LogIcon /> Output Log
    </button>
    <div className="flex h-full w-[399px] items-center bg-[#242424] pl-[14px]">
      <button className="flex w-[76px] items-center gap-1">
        <ConsoleIcon /> Cmd <Chevron className="ml-[3px]" />
      </button>
      <input
        aria-label="Console command"
        placeholder="Enter Console Command"
        className="h-[22px] w-[300px] rounded border border-[#383838] bg-[#0f0f0f] px-2 font-[DejaVu_Sans_Mono,monospace] text-[12px] placeholder:text-[#575757]"
      />
    </div>
    <div className="h-full flex-1 bg-[#242424]" />
    <button className="flex h-full w-[106px] items-center gap-[6px] bg-[#242424] pl-3">
      <span className="relative">
        <SaveIcon className="h-[14px] w-[14px]" />
        <svg viewBox="0 0 8 8" className="absolute right-[-2px] bottom-[-2px] h-2 w-2" stroke="#e0e0e0" strokeWidth="1.600">
          <path d="M4 0v8M.5 2l7 4M7.500 2l-7 4" />
        </svg>
      </span>
      1 Unsaved
    </button>
    <button className="mr-1 flex h-full w-[161px] items-center gap-[6px] bg-[#242424] pl-[14px]">
      <BranchIcon /> Revision Control <Chevron />
    </button>
  </footer>
);

/* ---------- popups ---------- */

type MenuRow = { label: string; icon?: ReactNode; keys?: string; sub?: boolean; disabled?: boolean; active?: boolean };

const editRows: MenuRow[] = [
  { label: "Cut", icon: <CutIcon />, keys: "CTRL+X" },
  { label: "Copy", icon: <CopyIcon />, keys: "CTRL+C" },
  { label: "Paste", icon: <PasteIcon />, keys: "CTRL+V", disabled: true },
  { label: "Duplicate", icon: <DuplicateIcon />, keys: "CTRL+D" },
  { label: "Delete", icon: <TrashIcon />, keys: "DELETE" },
  { label: "Find References", sub: true, active: true },
  { label: "Rename", icon: <RenameIcon />, keys: "F2" },
  { label: "Edit Widget Blueprint..." },
  { label: "Wrap With...", sub: true },
  { label: "Replace With...", sub: true },
];

const MenuItem = ({ row }: { row: MenuRow }) => (
  <button
    role="menuitem"
    disabled={row.disabled}
    className={clsx(
      "flex w-full items-center pr-2 pl-[25px] whitespace-nowrap",
      row.sub ? "h-[22px]" : "h-[21px]",
      row.active && "bg-[#0070e0]",
      row.disabled ? "text-[#6a6a6a]" : "text-white",
    )}
  >
    {row.icon && <span className="w-6">{row.icon}</span>}
    <span className="flex-1 text-left">{row.label}</span>
    {row.keys && <span className={clsx("text-[12px]", row.disabled ? "text-[#575757]" : "text-[#a8a8a8]")}>{row.keys}</span>}
    {row.sub && <Chevron right className="-mr-px text-[#c8c8c8]" />}
  </button>
);

const MenuHeading = ({ name }: { name: string }) => (
  <div className="flex h-[23px] items-center gap-[13px] pr-[11px] pl-[11px] text-[10px] font-bold tracking-[1px] text-[#6e6e6e]">
    {name}
    <span className="h-px flex-1 bg-[#6a6a6a]" />
  </div>
);

const ContextMenu = () => (
  <div role="menu" className="absolute top-[427px] left-[129px] w-[200px] border border-[#4a4a4a] bg-[#383838] pt-[9px] pb-2 shadow-lg">
    <label className="mx-[9px] mb-[2px] flex h-5 items-center gap-[6px] rounded-full bg-[#242424] px-1">
      <Search strokeWidth={2} className="h-4 w-4 shrink-0 text-[#8a8a8a]" />
      <input type="search" aria-label="Search menu" placeholder="Start typing to search" className="w-full min-w-0 bg-transparent outline-none placeholder:text-[#505050]" />
    </label>
    <MenuHeading name="EDIT" />
    {editRows.map((row) => (
      <MenuItem key={row.label} row={row} />
    ))}
    <MenuHeading name="EXPANSION" />
    <MenuItem row={{ label: "Collapse All" }} />
    <MenuItem row={{ label: "Expand All" }} />
  </div>
);

const SubMenu = () => (
  <div role="menu" className="absolute top-[587px] left-[329px] w-[163px] border border-[#4a4a4a] bg-[#383838] py-[9px]">
    {["By Name", "By Name (All)", "By Class Member", "By Class Member (All)"].map((label) => (
      <MenuItem key={label} row={{ label, active: label === "By Class Member" }} />
    ))}
  </div>
);

const Tooltip = () => (
  <div role="tooltip" className="absolute top-[667px] left-[496px] flex h-9 items-center rounded-[2px] border-2 border-black bg-[#f0f0f0] px-[9px] text-[12px] whitespace-nowrap text-black">
    Find references of this item by class member
  </div>
);

export default function App() {
  return (
    <div className="relative h-screen overflow-hidden bg-[#0c0c0c] pt-[2px] pr-[1px] pb-[2px] pl-[2px] font-[Roboto,sans-serif] text-[13px] leading-4 text-[#c0c0c0]">
      <div className="flex h-full flex-col border border-[#333333] bg-[#151515]">
        <TitleBar />
        <Toolbar />
        <div className="flex min-h-0 flex-1 pt-1 pr-[5px] pl-1">
          <div className="flex w-[265px] shrink-0 flex-col">
            <Palette />
            <Hierarchy />
          </div>
          <div className="ml-[5px] flex min-w-0 flex-1">
            <Viewport />
          </div>
          <div className="ml-[5px] flex">
            <Details />
          </div>
        </div>
        <StatusBar />
      </div>
      <ContextMenu />
      <SubMenu />
      <Tooltip />
    </div>
  );
}
